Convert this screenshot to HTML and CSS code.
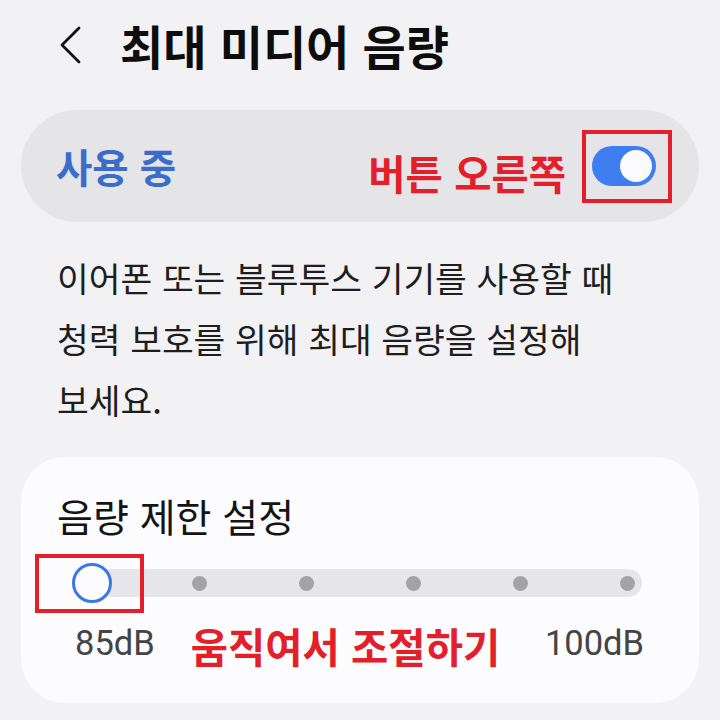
FILE: index.html
```html
<!DOCTYPE html>
<html lang="ko">
<head>
<meta charset="utf-8">
<title>최대 미디어 음량</title>
<link rel="stylesheet" href="styles.css">
</head>
<body>
<div class="page">
  <header class="header">
    <svg class="back" width="24" height="38" viewBox="0 0 24 38" aria-hidden="true">
      <path d="M20 2 L3 19 L20 36" fill="none" stroke="#111" stroke-width="2.8" stroke-linecap="round" stroke-linejoin="round"/>
    </svg>
    <h1 class="title">최대 미디어 음량</h1>
  </header>

  <section class="switch-card">
    <span class="switch-label">사용 중</span>
    <div class="switch-right">
      <span class="note note-toggle">버튼 오른쪽</span>
      <div class="mark-box">
        <div class="toggle"><span class="knob"></span></div>
      </div>
    </div>
  </section>

  <p class="desc">이어폰 또는 블루투스 기기를 사용할 때<br>청력 보호를 위해 최대 음량을 설정해<br>보세요.</p>

  <section class="limit-card">
    <h2 class="limit-title">음량 제한 설정</h2>
    <div class="slider-row">
      <div class="track">
        <span class="stop"><span class="thumb"></span></span>
        <span class="stop"><span class="dot"></span></span>
        <span class="stop"><span class="dot"></span></span>
        <span class="stop"><span class="dot"></span></span>
        <span class="stop"><span class="dot"></span></span>
        <span class="stop"><span class="dot"></span></span>
        <span class="thumb-mark"></span>
      </div>
    </div>
    <div class="labels">
      <span class="db">85dB</span>
      <span class="note note-slider">움직여서 조절하기</span>
      <span class="db">100dB</span>
    </div>
  </section>
</div>
</body>
</html>
```

FILE: styles.css
```css
* { box-sizing: border-box; }
html, body { margin: 0; padding: 0; }
body {
  background: #f2f2f4;
  font-family: "Noto Sans CJK KR", "Noto Sans", sans-serif;
  color: #1a1a1a;
  width: 720px;
  height: 720px;
  overflow: hidden;
}
.page { padding: 0 21px; }

.header {
  display: flex;
  align-items: center;
  height: 60px;
  margin-top: 15px;
  padding-left: 38px;
}
.back { display: block; flex: none; }
.title {
  margin: 0 0 0 37px;
  font-size: 47px;
  line-height: 60px;
  font-weight: 700;
  color: #0d0d0d;
  white-space: nowrap;
}

.switch-card {
  margin-top: 35px;
  height: 112px;
  border-radius: 56px;
  background: #e5e5e8;
  display: flex;
  align-items: center;
  justify-content: space-between;
  padding: 0 27px 0 35px;
}
.switch-label {
  font-size: 39.5px;
  line-height: 44px;
  font-weight: 700;
  color: #3a6cc8;
  white-space: nowrap;
}
.switch-right { display: flex; align-items: center; gap: 16px; }
.note {
  color: #e3202a;
  font-weight: 700;
  font-size: 40.5px;
  line-height: 44px;
  white-space: nowrap;
}
.note-toggle { margin-top: 14px; }
.mark-box {
  flex: none;
  width: 90px;
  height: 73px;
  border: 4px solid #e3202a;
  display: flex;
  align-items: center;
  justify-content: center;
  padding-right: 6px;
}
.toggle {
  width: 64px;
  height: 40px;
  border-radius: 20px;
  background: #3f7ef0;
  display: flex;
  align-items: center;
  justify-content: flex-end;
  padding-right: 4px;
}
.knob {
  width: 32px;
  height: 32px;
  border-radius: 50%;
  background: #fbfbfd;
}

.desc {
  margin: 25px 0 0 36px;
  font-size: 34.5px;
  line-height: 61px;
  color: #1e1e1e;
  white-space: nowrap;
}

.limit-card {
  margin-top: 27px;
  height: 246px;
  border-radius: 44px;
  background: #fcfcfe;
  padding: 36px 36px 0 36px;
}
.limit-title {
  margin: 0;
  font-size: 39px;
  line-height: 44px;
  font-weight: 400;
  color: #141414;
  white-space: nowrap;
}
.slider-row {
  margin-top: 16px;
  height: 60px;
  display: flex;
  align-items: center;
  padding-left: 21px;
}
.track {
  position: relative;
  width: 564px;
  height: 28px;
  border-radius: 14px;
  background: #e6e6ea;
  display: flex;
  justify-content: space-between;
  align-items: center;
}
.stop {
  width: 28px;
  height: 28px;
  display: flex;
  align-items: center;
  justify-content: center;
}
.dot {
  width: 15px;
  height: 15px;
  border-radius: 50%;
  background: #a3a3a7;
  flex: none;
}
.thumb {
  flex: none;
  width: 40px;
  height: 40px;
  border-radius: 50%;
  border: 3.5px solid #3b78e7;
  background: #fcfcfe;
}
.thumb-mark {
  position: absolute;
  left: -43px;
  top: -15px;
  width: 109px;
  height: 59px;
  border: 4px solid #e3202a;
}

.labels {
  margin-top: 5px;
  display: flex;
  align-items: center;
  padding-left: 18px;
}
.db {
  font-family: Roboto, "Noto Sans", sans-serif;
  font-size: 34.5px;
  line-height: 44px;
  color: #444446;
}
.note-slider { margin: 6px 0 0 36px; }
.labels .db:last-child { margin-left: auto; margin-right: 19px; }
```
